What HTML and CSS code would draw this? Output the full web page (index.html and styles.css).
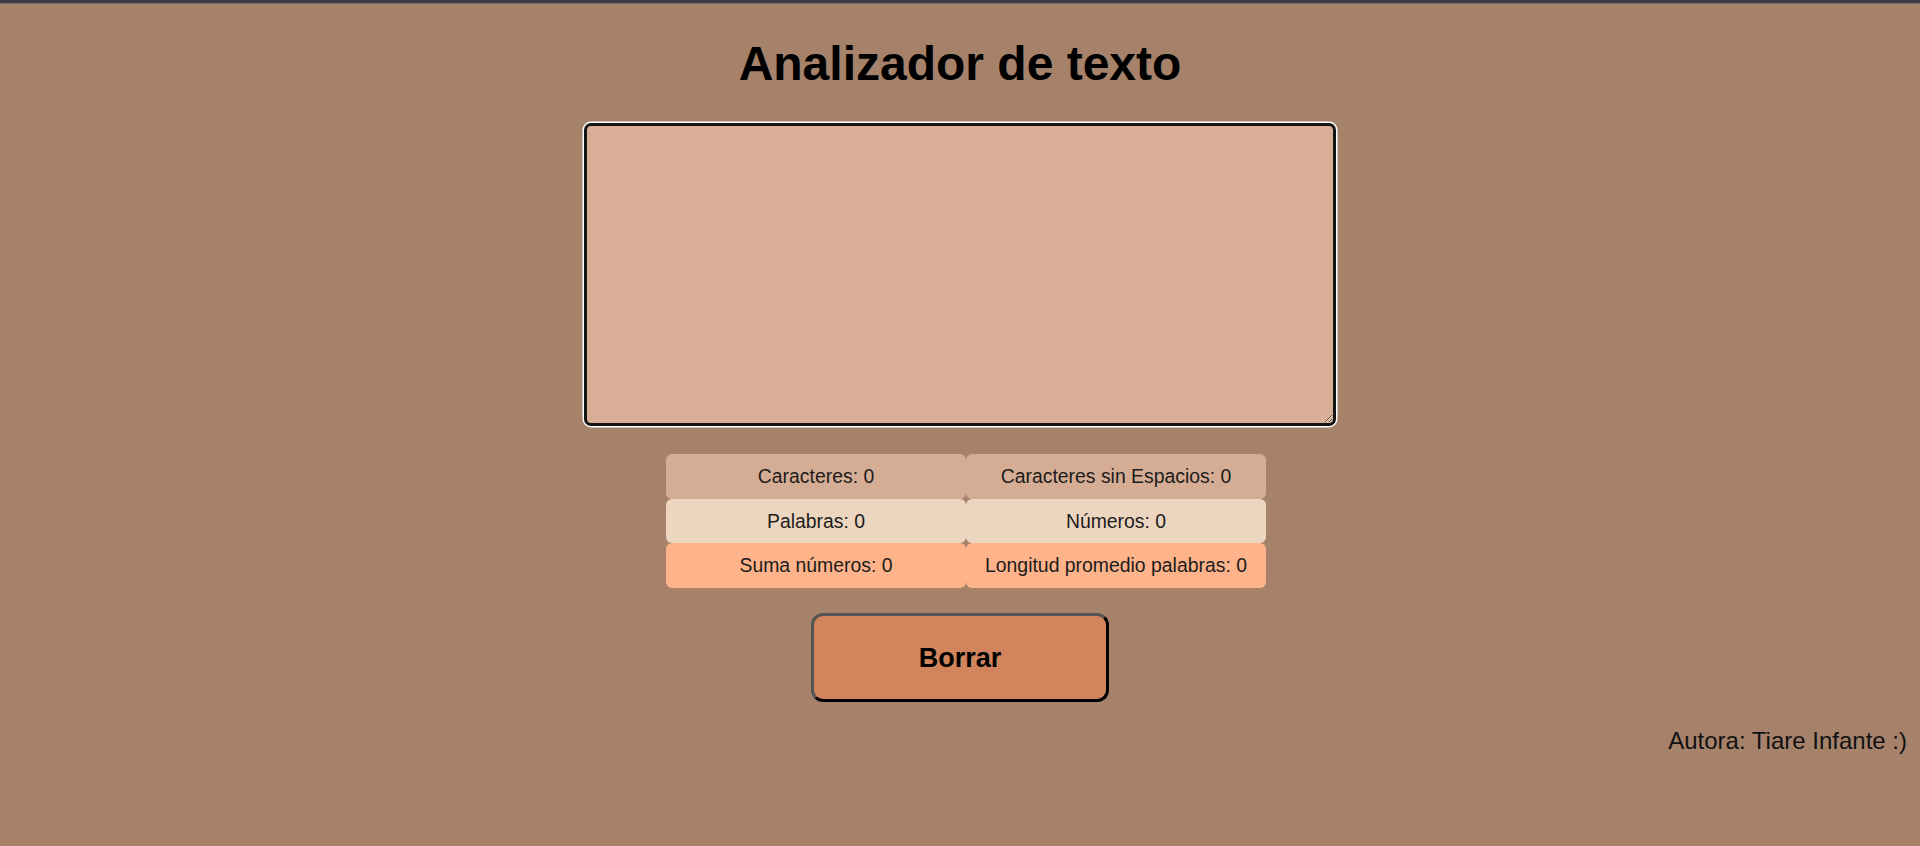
FILE: index.html
```html
<!DOCTYPE html>
<html lang="es">
<head>
<meta charset="utf-8">
<title>Analizador de texto</title>
<link rel="stylesheet" href="styles.css">
</head>
<body>
<div class="topbar"></div>
<main class="page">
  <h1 class="title">Analizador de texto</h1>
  <textarea class="input" autofocus></textarea>
  <ul class="stats">
    <li class="stat r1">Caracteres: 0</li>
    <li class="stat r1">Caracteres sin Espacios: 0</li>
    <li class="stat r2">Palabras: 0</li>
    <li class="stat r2">Números: 0</li>
    <li class="stat r3">Suma números: 0</li>
    <li class="stat r3">Longitud promedio palabras: 0</li>
  </ul>
  <button class="btn" type="button">Borrar</button>
  <footer class="footer">Autora: Tiare Infante :)</footer>
</main>
</body>
</html>
```
FILE: styles.css
```css
html, body {
  margin: 0;
  padding: 0;
  background: #a6826a;
  font-family: "Liberation Sans", Arial, sans-serif;
  color: #000;
}
body {
  min-height: 846px;
}
.topbar {
  height: 3px;
  background: #3b3c43;
  border-bottom: 1px solid #6f7072;
}
.page {
  display: flex;
  flex-direction: column;
  align-items: center;
}
.title {
  margin: 32px 0 0;
  font-size: 48px;
  font-weight: bold;
  line-height: 55px;
}
.input {
  box-sizing: border-box;
  margin-top: 32px;
  margin-left: 0;
  width: 752px;
  height: 303px;
  background: #d9af97;
  border: 3px solid #141414;
  border-radius: 7px;
  box-shadow: 0 0 0 1.5px #ffffff;
  outline: none;
  font-family: "Liberation Mono", monospace;
  font-size: 16px;
  padding: 4px;
  resize: both;
}
.stats {
  list-style: none;
  margin: 28px 0 0 12px;
  padding: 0;
  display: grid;
  grid-template-columns: 300px 300px;
  grid-auto-rows: 44.7px;
}
.stat {
  display: flex;
  align-items: center;
  justify-content: center;
  border-radius: 6px;
  font-size: 19.4px;
  color: #1c1c1c;
}
.r1 { background: #d5ad95; }
.r2 { background: #edd6bf; }
.r3 { background: #ffb38a; }
.btn {
  box-sizing: border-box;
  margin-top: 25px;
  width: 298px;
  height: 89px;
  padding: 2px 0 0;
  background: #d2845c;
  border: 3px solid #000;
  border-top-color: #555;
  border-left-color: #555;
  border-radius: 12px;
  font-family: "Liberation Sans", Arial, sans-serif;
  font-size: 27px;
  font-weight: bold;
  color: #000;
  cursor: pointer;
}
.footer {
  align-self: flex-end;
  margin: 25px 13px 0 0;
  font-size: 24px;
  line-height: 27.6px;
  color: #111;
}
```
